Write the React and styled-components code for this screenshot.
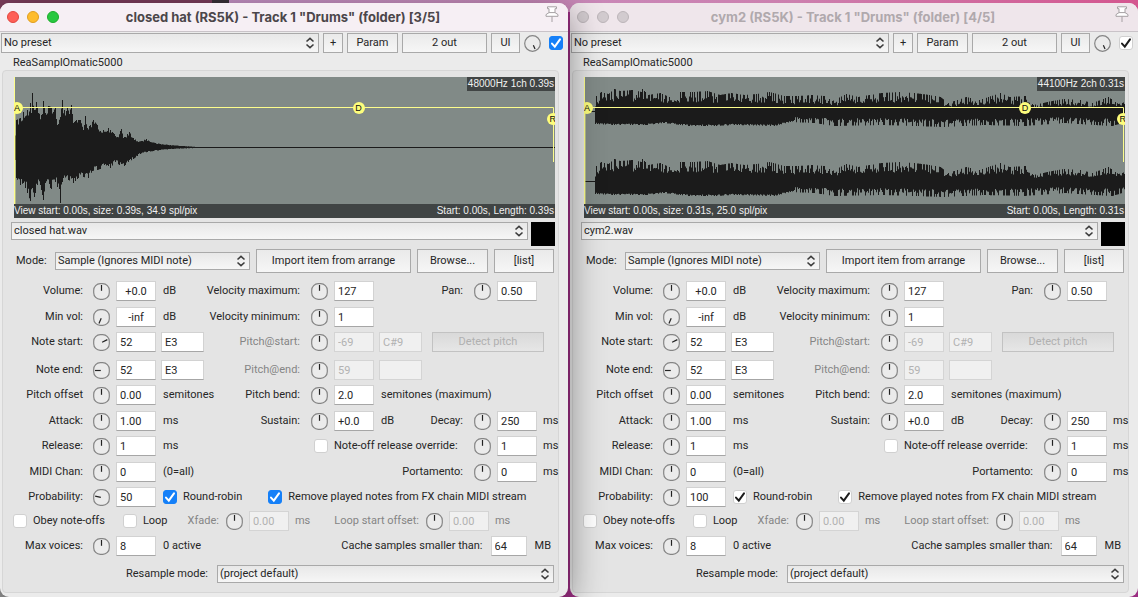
import React, { useId } from 'react'
import styled, { createGlobalStyle } from 'styled-components'

const GlobalStyle = createGlobalStyle`
  * {
    box-sizing: border-box;
  }
  body {
    margin: 0;
    background: #9b2d82;
    color: #262626;
    font-family: Roboto, 'Liberation Sans', sans-serif;
    font-size: 11px;
    line-height: 14px;
  }
  button, input, select {
    font: inherit;
    color: inherit;
    margin: 0;
  }
`

// wave shapes: [x, level]
const HAT_TOP = [
  [0, 70], [2, 43], [6, 41], [9, 35], [13, 33], [16, 26], [17, 36], [18, 16], [20, 33], [22, 25], [24, 36],
  [27, 38], [29, 24], [31, 36], [34, 29], [37, 30], [39, 35], [41, 30], [43, 48], [46, 40], [48, 23], [50, 33],
  [53, 30], [55, 37], [57, 28], [59, 46], [62, 43], [66, 43], [69, 53], [71, 39], [73, 51], [76, 48], [79, 43],
  [83, 48], [86, 54], [89, 53], [94, 51], [99, 56], [103, 60], [107, 52], [109, 61], [115, 55], [119, 61],
  [124, 65], [132, 62], [136, 65], [146, 67], [156, 68], [183, 70], [541, 70],
]
const HAT_BOTTOM = [
  [0, 70], [2, 101], [6, 108], [9, 106], [13, 116], [16, 124], [18, 111], [20, 120], [23, 108], [26, 108],
  [29, 123], [31, 106], [37, 112], [41, 105], [43, 110], [46, 126], [48, 105], [54, 103], [59, 106], [64, 101],
  [69, 100], [74, 101], [78, 94], [83, 93], [86, 92], [93, 88], [96, 91], [101, 85], [105, 88], [110, 89],
  [114, 85], [119, 82], [126, 77], [133, 75], [139, 74], [156, 72], [183, 71], [541, 71],
]
const CYM_TOP = [
  [0, 34], [10, 34], [12, 19], [17, 15], [24, 17], [30, 12], [36, 14], [48, 13], [57, 15], [58, 12], [64, 18],
  [76, 16], [85, 20], [96, 15], [110, 15], [123, 14], [136, 18], [147, 16], [160, 18], [172, 17], [185, 15],
  [200, 19], [214, 19], [228, 18], [240, 19], [248, 24], [262, 17], [274, 20], [297, 16], [315, 15], [330, 16],
  [345, 18], [356, 20], [364, 26], [382, 20], [395, 23], [404, 20], [416, 16], [425, 20], [441, 19], [449, 28],
  [468, 24], [480, 22], [496, 23], [508, 26], [524, 20], [534, 27], [541, 25],
]
const CYM_BOTTOM = [
  [0, 35], [10, 35], [11, 47], [30, 48], [62, 48], [80, 46], [96, 48], [105, 49], [130, 49], [150, 48],
  [190, 49], [206, 45], [230, 46], [250, 49], [300, 48], [360, 50], [400, 48], [440, 49], [480, 46],
  [510, 48], [528, 49], [541, 45],
]

const levelAt = (points, x) => {
  const i = points.findIndex((p) => p[0] >= x)
  if (i <= 0) return points[0][1]
  const [x0, y0] = points[i - 1]
  const [x1, y1] = points[i]
  return y0 + ((y1 - y0) * (x - x0)) / (x1 - x0)
}

const noise = (n) => {
  const v = Math.sin(n * 127.1 + 11.7) * 43758.5453
  return v - Math.floor(v)
}

const dip = (n) => {
  const v = noise(n)
  return v < 0.35 ? 0 : v
}

const wavePath = (top, bottom, mid, shift, topDepth, bottomDepth) => {
  const upper = []
  const lower = []
  for (let x = 0; x <= 541; x += 1) {
    const t = levelAt(top, x)
    const b = levelAt(bottom, x)
    const isPeak = top.some((p) => p[0] === x)
    const isTrough = bottom.some((p) => p[0] === x)
    const cutT = isPeak ? 0 : dip(x) * topDepth * (mid - t)
    const cutB = isTrough ? 0 : dip(x + 900) * bottomDepth(x) * (b - mid)
    // one flat step per column keeps the peaks at full height
    upper.push(`${x} ${(t + cutT + shift).toFixed(1)}L${x + 1} ${(t + cutT + shift).toFixed(1)}`)
    const low = (Math.max(b - cutB, mid + 1) + shift).toFixed(1)
    lower.unshift(`${x + 1} ${low}L${x} ${low}`)
  }
  return `M${upper.join('L')}L${lower.join('L')}Z`
}

const HAT = [wavePath(HAT_TOP, HAT_BOTTOM, 70, 0, 0.2, () => 0.2)]
const cymDepth = (x) => (x < 210 ? 0.1 : 0.5)
const CYM = [
  wavePath(CYM_TOP, CYM_BOTTOM, 34, 0, 0.55, cymDepth),
  wavePath(CYM_TOP, CYM_BOTTOM, 34, 70, 0.55, cymDepth),
]

const Desktop = styled.main`
  display: grid;
  grid-template-columns: minmax(0, 1fr) minmax(0, 1fr);
  column-gap: 2px;
  min-height: 100vh;
  padding-top: 3px;
  background:
    linear-gradient(90deg, #7c3d5c 0 212px, #3a3238 212px 229px, #c693c6 229px, #c78dbd 40%, #cc7fae 70%, #d4568f) 0 0 / 100% 12px no-repeat,
    linear-gradient(90deg, #999 0 20px, #7a3560 20px 560px, #9b2d82 560px);
`
const Window = styled.section`
  position: relative;
  z-index: ${(p) => (p.$active ? 1 : 0)};
  display: flex;
  flex-direction: column;
  border-radius: 9px;
  background: #ebebeb;
  box-shadow: ${(p) => (p.$active ? '0 8px 36px rgba(0, 0, 0, 0.45)' : 'none')};
`
const TitleBar = styled.header`
  display: grid;
  grid-template-columns: 60px 1fr 60px;
  align-items: center;
  height: 29px;
  padding: 0 9px 0 7px;
  border-bottom: 1px solid #c9c3c8;
  border-radius: 9px 9px 0 0;
  background: ${(p) => (p.$active ? '#f6eff4' : '#efe6eb')};
`
const Lights = styled.div`
  display: flex;
  gap: 8px;
`
const Light = styled.button`
  width: 12px;
  height: 12px;
  padding: 0;
  border: 1px solid ${(p) => p.$edge};
  border-radius: 50%;
  background: ${(p) => p.$fill};
`
const Title = styled.h1`
  margin: 0;
  font-family: Inter, 'Liberation Sans', sans-serif;
  font-size: 13px;
  font-weight: 700;
  text-align: center;
  white-space: nowrap;
  color: ${(p) => (p.$active ? '#4b464a' : '#b0a9ad')};
`
const PinButton = styled.button`
  justify-self: end;
  display: flex;
  padding: 0 0 5px;
  border: 0;
  background: none;
`
const Toolbar = styled.div`
  display: flex;
  align-items: center;
  gap: 4px;
  padding: 1px 5px 0 1px;
`
const ToolbarEnd = styled.div`
  display: flex;
  align-items: center;
  gap: 8px;
`
const PluginName = styled.h2`
  margin: 0;
  padding: 3px 13px 0;
  font-size: 11px;
  font-weight: 400;
`
const Panel = styled.div`
  flex: 1;
  margin: 0 9px 4px 2px;
  padding: 6px 3px 9px 8px;
  border: 1px solid #d6d6d6;
  border-radius: 4px;
  background: #e4e4e4;
`
const Button = styled.button`
  flex: none;
  width: ${(p) => p.$w}px;
  height: ${(p) => (p.$tall ? 24 : 20)}px;
  padding: 0;
  border: 1px solid #a9a9a9;
  background: linear-gradient(#eaeaea, #f6f6f6);
  white-space: nowrap;
  &:disabled {
    border-color: #c2c2c2;
    background: linear-gradient(#d9d9d9, #e6e6e6);
    color: #b0b0b0;
  }
`
const SelectBox = styled.div`
  position: relative;
  flex: ${(p) => (p.$w ? 'none' : 1)};
  width: ${(p) => (p.$w ? `${p.$w}px` : 'auto')};
  height: ${(p) => (p.$tall ? 20 : 18)}px;
  select {
    display: block;
    width: 100%;
    height: 100%;
    padding: 0 20px 0 2px;
    border: 1px solid #a9a9a9;
    border-radius: 0;
    background: linear-gradient(#e8e8e8, #f6f6f6);
    appearance: none;
  }
  svg {
    position: absolute;
    top: 50%;
    right: 4px;
    transform: translateY(-50%);
    pointer-events: none;
  }
`
const Field = styled.input`
  flex: none;
  width: ${(p) => p.$w || 40}px;
  height: 20px;
  padding: 0 3px;
  border: 1px solid #d2d2d2;
  border-bottom-color: #a6a6a6;
  background: #fff;
  text-align: ${(p) => (p.$center ? 'center' : 'left')};
  &:disabled {
    border-color: #d4d4d4;
    background: #f0f0f0;
    color: #b2b2b2;
  }
`
const KnobBox = styled.span`
  position: relative;
  flex: none;
  display: flex;
  input {
    position: absolute;
    inset: 0;
    width: 100%;
    height: 100%;
    opacity: 0;
  }
`
const CheckLabel = styled.label`
  display: flex;
  align-items: center;
  gap: 6px;
  white-space: nowrap;
`
const Tick = styled.span`
  position: relative;
  display: flex;
  input {
    width: 14px;
    height: 14px;
    border: 1px solid #d0d0d0;
    border-radius: 3px;
    background: #fff;
    appearance: none;
  }
  input:checked {
    border-color: ${(p) => (p.$active ? '#1580f8' : '#d0d0d0')};
    background: ${(p) => (p.$active ? '#1580f8' : '#fff')};
  }
  svg {
    position: absolute;
    inset: 0;
    pointer-events: none;
  }
`

const Display = styled.div`
  position: relative;
  height: 141px;
  margin-left: 3px;
  overflow: hidden;
  background: #818a87;
  color: #f0f0f0;
  font-family: 'Liberation Sans', Arial, sans-serif;
  font-size: 10px;
  > svg {
    display: block;
    width: 100%;
    height: 100%;
  }
`
const SampleInfo = styled.div`
  position: absolute;
  top: 0;
  right: 0;
  padding: 0 1px;
  background: #404444;
`
const ViewInfo = styled.div`
  position: absolute;
  right: 0;
  bottom: 0;
  left: 0;
  display: flex;
  justify-content: space-between;
  padding: 0 1px 0 0;
  background: #404444;
`
const Marker = styled.span`
  position: absolute;
  top: ${(p) => p.$top}px;
  width: 12px;
  height: 12px;
  margin-left: -6px;
  border-radius: 50%;
  background: #fdfd7c;
  color: #111;
  font-size: 9px;
  line-height: 12px;
  text-align: center;
`

const FileRow = styled.div`
  display: flex;
  align-items: flex-start;
  gap: 3px;
  margin-top: 4px;
`
const Meter = styled.div`
  width: 24px;
  height: 24px;
  background: #000;
`
const ModeRow = styled.div`
  display: flex;
  align-items: center;
  gap: 6px;
  margin-top: 3px;
  padding: 0 1px 0 5px;
  > label {
    width: 33px;
  }
`
const Params = styled.div`
  display: grid;
  grid-template-rows: 26px 25px 28px 25px 26px 25px 26px 25px 24px 25px 29px 18px;
  margin-top: 8px;
`
const Row = styled.div`
  display: grid;
  grid-template-columns: 72px 73px minmax(0, 145fr) 73px minmax(0, 90fr) 73px 18px;
  align-items: center;
  height: 20px;
  white-space: nowrap;
`
const FlexRow = styled.div`
  display: flex;
  align-items: center;
  height: 20px;
  white-space: nowrap;
`
const Name = styled.label`
  text-align: right;
  color: ${(p) => (p.$dim ? '#858585' : 'inherit')};
`
const Between = styled.div`
  display: flex;
  align-items: center;
  justify-content: space-between;
  gap: 10px;
  padding: 0 1px 0 ${(p) => (p.$tight ? 5 : 7)}px;
  > label:only-child {
    margin-left: auto;
  }
`
const Unit = styled.span`
  padding-left: 6px;
  color: ${(p) => (p.$dim ? '#858585' : 'inherit')};
`
const Dial = styled.div`
  display: flex;
  align-items: center;
  gap: 6px;
  padding-left: ${(p) => (p.$near ? 7 : 10)}px;
`
const Checks = styled.div`
  grid-column: span 5;
  display: flex;
  gap: 26px;
  padding-left: 7px;
`
const Override = styled.div`
  grid-column: span 2;
  padding-left: 13px;
`
const CacheSize = styled.div`
  grid-column: span 4;
  display: flex;
  align-items: center;
  justify-content: flex-end;
  gap: 8px;
  padding-right: 4px;
`
const LoopRow = styled(FlexRow)`
  padding-left: 2px;
  > label + label {
    margin-left: 18px;
  }
  > label + ${Name} {
    margin-left: 20px;
  }
  > span + ${Name} {
    margin-left: 24px;
  }
`
const ResampleRow = styled.div`
  display: flex;
  gap: 9px;
  align-items: center;
  padding: 0 1px 0 115px;
  white-space: nowrap;
`

const Chevrons = () => (
  <svg width="10" height="12" viewBox="0 0 10 12" fill="none" stroke="#3c3c3c" strokeWidth="1.6">
    <path d="M1.5 4.5 5 1.4l3.5 3.1M1.5 7.5 5 10.6l3.5-3.1" />
  </svg>
)

const Pin = () => (
  <svg width="14" height="17" viewBox="0 0 14 17" fill="#fff" stroke="#a5a0a3">
    <path d="M2.500.8h9v1.900H10v3.900l3 2v1.700H1V8.600l3-2V2.700H2.500z" />
    <path d="M4 6.600h6M7 10.500V16" />
  </svg>
)

const Select = ({ id, label, value, w, tall }) => (
  <SelectBox $w={w} $tall={tall}>
    <select id={id} aria-label={label} defaultValue={value}>
      <option>{value}</option>
    </select>
    <Chevrons />
  </SelectBox>
)

const Knob = ({ label, angle = 0, round, disabled }) => (
  <KnobBox>
    <svg width="17" height="17" viewBox="0 0 17 17">
      <rect x=".7" y=".7" width="15.600" height="15.600" rx={round ? 7.8 : 6.6} fill="#ebebeb" stroke="#858585" strokeWidth="1.200" />
      <path d={round ? 'M8.500 6.500V2.500' : 'M8.500 7.800V2'} transform={`rotate(${angle} 8.5 8.5)`} stroke="#222" strokeWidth="1.200" />
    </svg>
    <input type="range" aria-label={label} disabled={disabled} />
  </KnobBox>
)

const Control = ({ id, name, value, angle, disabled, center, near, w }) => (
  <Dial $near={near}>
    <Knob label={`${name} knob`} angle={angle} disabled={disabled} />
    <Field id={id} defaultValue={value} disabled={disabled} $center={center} $w={w} />
  </Dial>
)

const Check = ({ label, ariaLabel, on, active }) => (
  <CheckLabel>
    <Tick $active={active}>
      <input type="checkbox" aria-label={ariaLabel} defaultChecked={on} />
      {on && (
        <svg width="14" height="14" viewBox="0 0 14 14" fill="none" stroke={active ? '#fff' : '#1c1c1c'} strokeWidth="2">
          <path d="M3 7.600 5.800 10.600 11 3.400" strokeLinecap="round" />
        </svg>
      )}
    </Tick>
    {label}
  </CheckLabel>
)

const SampleView = ({ fx }) => (
  <Display>
    <svg viewBox="0 0 541 141" preserveAspectRatio="none">
      {fx.wave.map((d) => (
        <path key={d} d={d} fill="#1b1b1b" />
      ))}
      <path d={fx.midline} stroke="#1b1b1b" />
      <path d="M.5 0V141M0 30.500H539.500V85" fill="none" stroke="#fdfd8c" />
      <path d="M1.500 30.500V141" stroke="#fdfd8c" strokeOpacity=".4" />
    </svg>
    <Marker $top={25} style={{ left: 3 }}>A</Marker>
    <Marker $top={25} style={{ left: fx.decayAt }}>D</Marker>
    <Marker $top={36} style={{ left: '99.6%' }}>R</Marker>
    <SampleInfo>{fx.format}</SampleInfo>
    <ViewInfo>
      <span>{fx.view}</span>
      <span>{fx.range}</span>
    </ViewInfo>
  </Display>
)

const FxWindow = ({ fx }) => {
  const { active } = fx
  const uid = useId()
  const id = (key) => `${uid}${key}`
  const lights = active
    ? [['#fe5f57', '#e2463f'], ['#febc2e', '#e09e1f'], ['#28c840', '#1dad2b']]
    : [['#d2cbcf', '#bcb5b9'], ['#d2cbcf', '#bcb5b9'], ['#d2cbcf', '#bcb5b9']]

  return (
    <Window $active={active}>
      <TitleBar $active={active}>
        <Lights>
          {['Close', 'Minimize', 'Zoom'].map((name, i) => (
            <Light key={name} aria-label={name} $fill={lights[i][0]} $edge={lights[i][1]} />
          ))}
        </Lights>
        <Title $active={active}>{fx.title}</Title>
        <PinButton aria-label="Pin window"><Pin /></PinButton>
      </TitleBar>
      <Toolbar>
        <Select label="Preset" value="No preset" tall />
        <Button $w={20}>+</Button>
        <Button $w={51}>Param</Button>
        <Button $w={85}>2 out</Button>
        <Button $w={29}>UI</Button>
        <ToolbarEnd>
          <Knob label="Wet" angle={155} round />
          <Check ariaLabel="Enabled" on active={active} />
        </ToolbarEnd>
      </Toolbar>
      <PluginName>ReaSamplOmatic5000</PluginName>
      <Panel>
        <SampleView fx={fx} />
        <FileRow>
          <Select label="Sample file" value={fx.file} />
          <Meter />
        </FileRow>
        <ModeRow>
          <label htmlFor={id('mode')}>Mode:</label>
          <Select id={id('mode')} value="Sample (Ignores MIDI note)" w={195} />
          <Button $w={155} $tall>Import item from arrange</Button>
          <Button $w={71} $tall>Browse...</Button>
          <Button $w={60} $tall>[list]</Button>
        </ModeRow>

        <Params>
          <Row>
            <Name htmlFor={id('vol')}>Volume:</Name>
            <Control id={id('vol')} name="Volume" value="+0.0" center />
            <Between>
              dB
              <Name htmlFor={id('vmax')}>Velocity maximum:</Name>
            </Between>
            <Control id={id('vmax')} name="Velocity maximum" value="127" />
            <Between>
              <Name htmlFor={id('pan')}>Pan:</Name>
            </Between>
            <Control id={id('pan')} name="Pan" value="0.50" />
          </Row>
          <Row>
            <Name htmlFor={id('min')}>Min vol:</Name>
            <Control id={id('min')} name="Min vol" value="-inf" angle={203} center />
            <Between>
              dB
              <Name htmlFor={id('vmin')}>Velocity minimum:</Name>
            </Between>
            <Control id={id('vmin')} name="Velocity minimum" value="1" />
          </Row>
          <Row>
            <Name htmlFor={id('ns')}>Note start:</Name>
            <Control id={id('ns')} name="Note start" value="52" angle={64} />
            <Between $tight>
              <Field aria-label="Note start name" defaultValue="E3" $w={43} />
              <Name htmlFor={id('ps')} $dim>Pitch@start:</Name>
            </Between>
            <Control id={id('ps')} name="Pitch@start" value="-69" disabled />
            <Between $tight>
              <Field aria-label="Pitch start note" defaultValue="C#9" $w={43} disabled />
              <Button $w={112} disabled>Detect pitch</Button>
            </Between>
          </Row>
          <Row>
            <Name htmlFor={id('ne')}>Note end:</Name>
            <Control id={id('ne')} name="Note end" value="52" angle={270} />
            <Between $tight>
              <Field aria-label="Note end name" defaultValue="E3" $w={43} />
              <Name htmlFor={id('pe')} $dim>Pitch@end:</Name>
            </Between>
            <Control id={id('pe')} name="Pitch@end" value="59" disabled />
            <Between $tight>
              <Field aria-label="Pitch end note" defaultValue="" $w={43} disabled />
            </Between>
          </Row>
          <Row>
            <Name htmlFor={id('po')}>Pitch offset</Name>
            <Control id={id('po')} name="Pitch offset" value="0.00" />
            <Between>
              semitones
              <Name htmlFor={id('pb')}>Pitch bend:</Name>
            </Between>
            <Control id={id('pb')} name="Pitch bend" value="2.0" />
            <Between>semitones (maximum)</Between>
          </Row>
          <Row>
            <Name htmlFor={id('att')}>Attack:</Name>
            <Control id={id('att')} name="Attack" value="1.00" />
            <Between>
              ms
              <Name htmlFor={id('sus')}>Sustain:</Name>
            </Between>
            <Control id={id('sus')} name="Sustain" value="+0.0" />
            <Between>
              dB
              <Name htmlFor={id('dec')}>Decay:</Name>
            </Between>
            <Control id={id('dec')} name="Decay" value="250" />
            <Unit>ms</Unit>
          </Row>
          <Row>
            <Name htmlFor={id('rel')}>Release:</Name>
            <Control id={id('rel')} name="Release" value="1" />
            <Between>ms</Between>
            <Override>
              <Check label="Note-off release override:" active={active} />
            </Override>
            <Control id={id('over')} name="Release override" value="1" />
            <Unit>ms</Unit>
          </Row>
          <Row>
            <Name htmlFor={id('chan')}>MIDI Chan:</Name>
            <Control id={id('chan')} name="MIDI channel" value="0" />
            <Between>(0=all)</Between>
            <span />
            <Between>
              <Name htmlFor={id('port')}>Portamento:</Name>
            </Between>
            <Control id={id('port')} name="Portamento" value="0" />
            <Unit>ms</Unit>
          </Row>
          <Row>
            <Name htmlFor={id('prob')}>Probability:</Name>
            <Control id={id('prob')} name="Probability" value={fx.probability} angle={fx.probabilityAngle} />
            <Checks>
              <Check label="Round-robin" on active={active} />
              <Check label="Remove played notes from FX chain MIDI stream" on active={active} />
            </Checks>
          </Row>
          <LoopRow>
            <Check label="Obey note-offs" active={active} />
            <Check label="Loop" active={active} />
            <Name htmlFor={id('xf')} $dim>Xfade:</Name>
            <Control id={id('xf')} name="Xfade" value="0.00" near disabled />
            <Unit $dim>ms</Unit>
            <Name htmlFor={id('lso')} $dim>Loop start offset:</Name>
            <Control id={id('lso')} name="Loop start offset" value="0.00" near disabled />
            <Unit $dim>ms</Unit>
          </LoopRow>
          <Row>
            <Name htmlFor={id('max')}>Max voices:</Name>
            <Control id={id('max')} name="Max voices" value="8" />
            <Between>0 active</Between>
            <CacheSize>
              <label htmlFor={id('cache')}>Cache samples smaller than:</label>
              <Field id={id('cache')} defaultValue="64" $w={36} />
              MB
            </CacheSize>
          </Row>
          <ResampleRow>
            <label htmlFor={id('res')}>Resample mode:</label>
            <Select id={id('res')} value="(project default)" />
          </ResampleRow>
        </Params>
      </Panel>
    </Window>
  )
}

const windows = [
  {
    active: true,
    title: 'closed hat (RS5K) - Track 1 "Drums" (folder) [3/5]',
    file: 'closed hat.wav',
    format: '48000Hz 1ch 0.39s',
    view: 'View start: 0.00s, size: 0.39s, 34.9 spl/pix',
    range: 'Start: 0.00s, Length: 0.39s',
    wave: HAT,
    midline: 'M0 70.5H541',
    decayAt: '63.7%',
    probability: '50',
    probabilityAngle: 282,
  },
  {
    active: false,
    title: 'cym2 (RS5K) - Track 1 "Drums" (folder) [4/5]',
    file: 'cym2.wav',
    format: '44100Hz 2ch 0.31s',
    view: 'View start: 0.00s, size: 0.31s, 25.0 spl/pix',
    range: 'Start: 0.00s, Length: 0.31s',
    wave: CYM,
    midline: 'M0 34.5H12M0 104.5H12',
    decayAt: '81.5%',
    probability: '100',
    probabilityAngle: 0,
  },
]

const App = () => {
  return (
    <>
      <GlobalStyle />
      <Desktop>
        {windows.map((fx) => (
          <FxWindow key={fx.file} fx={fx} />
        ))}
      </Desktop>
    </>
  )
}

export default App
